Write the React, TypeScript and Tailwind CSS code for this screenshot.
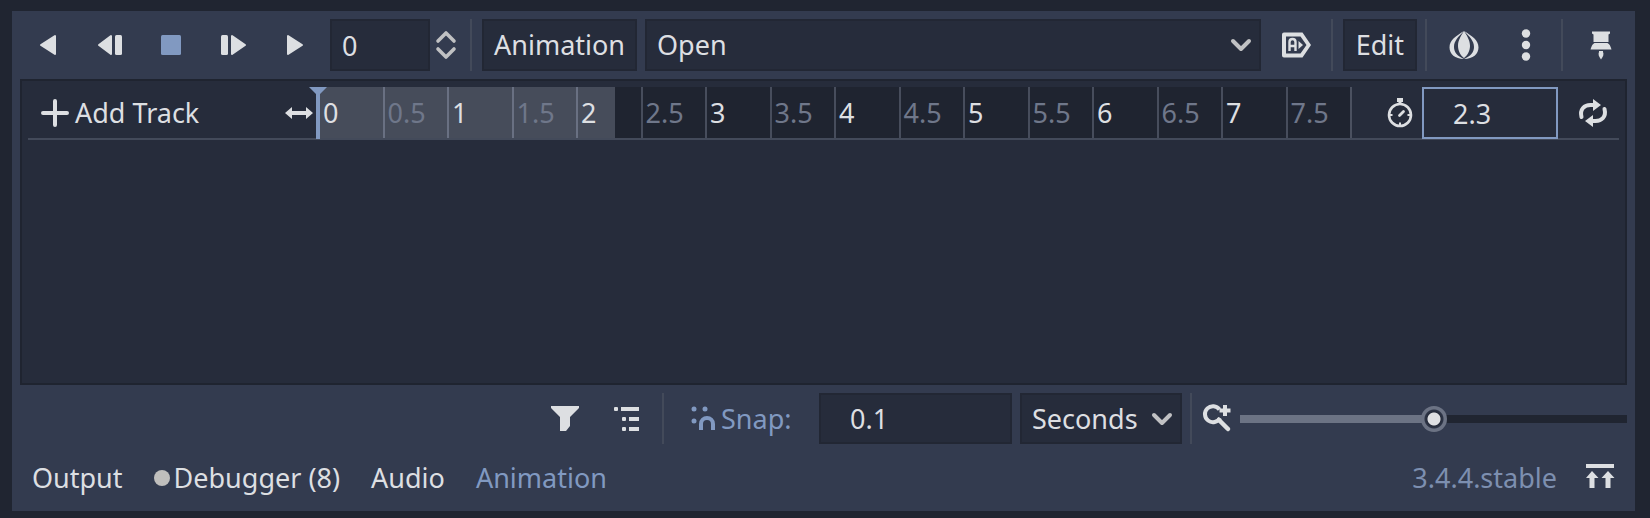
import React, { useState } from "react";

const Icon = ({ children, className = "" }: { children: React.ReactNode; className?: string }) => (
  <svg viewBox="0 0 32 32" fill="currentColor" className={"size-8 shrink-0 " + className} aria-hidden="true">
    {children}
  </svg>
);

const IconButton = ({ label, children, className = "" }: { label: string; children: React.ReactNode; className?: string }) => (
  <button aria-label={label} className={"flex h-full w-[54px] shrink-0 items-center justify-center " + className}>
    <Icon>{children}</Icon>
  </button>
);

const Separator = () => <div className="h-full w-1 shrink-0 border-l-2 border-[#434a5a]" />;

const box = "h-full border-2 border-[#222734] bg-[#262c3b]";

const Chevron = () => (
  <Icon className="pointer-events-none absolute top-0 right-1 bottom-0 my-auto text-[#c0c1c3]">
    <path d="M8 12l8 8 8-8" fill="none" stroke="currentColor" strokeWidth="4" strokeLinecap="round" strokeLinejoin="round" />
  </Icon>
);

const Select = ({ label, options, className }: { label: string; options: string[]; className: string }) => (
  <div className={"relative h-full " + className}>
    <select aria-label={label} className={box + " w-full appearance-none pl-[10px] outline-none"}>
      {options.map((o) => (
        <option key={o}>{o}</option>
      ))}
    </select>
    <Chevron />
  </div>
);

const RULER_END = 8;
const ticks = Array.from({ length: 16 }, (_, i) => i / 2);

function Toolbar() {
  return (
    <div className="flex h-[52px] gap-2">
      <IconButton label="Play backwards from end">
        <path d="M24 7v18L10 16z" stroke="currentColor" strokeWidth="2" strokeLinejoin="round" />
      </IconButton>
      <IconButton label="Play backwards">
        <path d="M18 7v18L6 16z" stroke="currentColor" strokeWidth="2" strokeLinejoin="round" />
        <rect x="22" y="6" width="7" height="20" rx="1.5" />
      </IconButton>
      <IconButton label="Stop" className="text-[#8199c1]">
        <rect x="6" y="6" width="20" height="20" rx="1.5" />
      </IconButton>
      <IconButton label="Play">
        <rect x="4" y="6" width="7" height="20" rx="1.5" />
        <path d="M15 7v18l13-9z" stroke="currentColor" strokeWidth="2" strokeLinejoin="round" />
      </IconButton>
      <IconButton label="Play from start">
        <path d="M9 7v18l14-9z" stroke="currentColor" strokeWidth="2" strokeLinejoin="round" />
      </IconButton>
      <div className="flex shrink-0">
        <input aria-label="Current time" defaultValue="0" className={box + " w-[100px] px-[10px] outline-none"} />
        <button aria-label="Step time" className="flex items-center">
          <Icon className="text-[#c0c1c3]">
            <path d="M8 12l8-8 8 8M8 20l8 8 8-8" fill="none" stroke="currentColor" strokeWidth="3.6" strokeLinecap="round" strokeLinejoin="round" />
          </Icon>
        </button>
      </div>
      <Separator />
      <button className={box + " shrink-0 px-[10px]"}>Animation</button>
      <Select label="Animation" options={["Open"]} className="min-w-0 flex-1" />
      <IconButton label="Autoplay on load">
        <path d="M4 3.500h18.500L31 16l-8.500 12.500H4a2 2 0 0 1-2-2v-21a2 2 0 0 1 2-2zM6 7.500v17h14.500L26.500 16l-6-8.500z" fillRule="evenodd" />
        <path d="M9.500 22V13q0-3 3-3t3 3v9M9.500 17h6" fill="none" stroke="currentColor" strokeWidth="2.400" />
        <path d="M18.500 12l4.500 4-4.500 4z" />
      </IconButton>
      <Separator />
      <button className={box + " shrink-0 px-[11px]"}>Edit</button>
      <Separator />
      <IconButton label="Onion skinning">
        <path d="M16 2c3 5 6 9 6 15 0 5-3 10-6 12-3-2-6-7-6-12 0-6 3-10 6-15z" />
        <path d="M16 2C8 7 1.500 11 1.500 18.500 1.500 25 7 30 16 30 9 27 6 23 6 18 6 12 10 8 16 2zM16 2c8 5 14.500 9 14.500 16.500C30.500 25 25 30 16 30c7-3 10-7 10-12C26 12 22 8 16 2z" />
      </IconButton>
      <IconButton label="Onion skinning options">
        <circle cx="16" cy="4.500" r="4.200" />
        <circle cx="16" cy="16" r="4.200" />
        <circle cx="16" cy="27.500" r="4.200" />
      </IconButton>
      <Separator />
      <IconButton label="Pin animation player">
        <path d="M8 2.500h18v2l-1.500 1v7.500h-15V5.500L8 4.500z" />
        <path d="M10.500 14h13c2 1 3 3 4 6.500h-21c1-3.500 2-5.500 4-6.500z" />
        <path d="M15 22h4v1q1.500 3-2 7.500-3.500-4.500-2-7.500z" />
      </IconButton>
    </div>
  );
}

function Timeline() {
  const [length, setLength] = useState("2.3");
  return (
    <div className="min-h-[120px] flex-1 border-2 border-[#1f2430] bg-[#262c3b] p-1.5">
      <div className="flex h-[53px] border-b-2 border-[#434a5a]">
        <div className="flex w-[290px] shrink-0 items-center justify-between">
          <button className="flex items-center gap-1 pl-[11px]">
            <Icon>
              <path d="M16 4v24M4 16h24" fill="none" stroke="currentColor" strokeWidth="4" strokeLinecap="round" />
            </Icon>
            Add Track
          </button>
          <Icon className="mr-[3px]">
            <path d="M2 16l7-6v4h14v-4l7 6-7 6v-4H9v4z" />
          </Icon>
        </div>
        <div className="relative grid min-w-0 flex-1 grid-cols-[repeat(16,minmax(0,1fr))] border-r-2 border-[#4b5160] bg-[#1f2430]">
          <div className="absolute inset-y-0 left-0 bg-[#464c5a]" style={{ width: `${(Number(length) / RULER_END) * 100}%` }} />
          {ticks.map((t) => (
            <div
              key={t}
              className={
                "relative flex items-center border-l-2 pl-[3px] " +
                (t <= Number(length) ? "border-[#697082] " : "border-[#474d5c] ") +
                (Number.isInteger(t) ? "text-[#dddfe2]" : "text-[#6f778a]")
              }
            >
              {t}
            </div>
          ))}
          <svg viewBox="0 0 18 52" className="absolute top-0 -left-[9px] h-[52px] w-[18px]" fill="#8199c1" aria-hidden="true">
            <path d="M0 0h18l-7 7v45H7V7z" />
          </svg>
        </div>
        <label htmlFor="length" className="flex shrink-0 items-center pr-1.5 pl-8">
          <Icon>
            <circle cx="16" cy="18" r="11" fill="none" stroke="currentColor" strokeWidth="2.600" />
            <path d="M13 1h6v4h-1.500v3h-3V5H13z" />
            <path d="M15.500 18.500l4-4" stroke="currentColor" strokeWidth="2.800" strokeLinecap="round" />
            <path d="M5 18h3.500M23.500 18H27M16 25.500V29" stroke="currentColor" strokeWidth="2" />
          </Icon>
        </label>
        <input
          id="length"
          aria-label="Animation length (seconds)"
          value={length}
          onChange={(e) => setLength(e.target.value)}
          className="h-[52px] w-[136px] shrink-0 border-2 border-[#8199c1] pl-[29px] outline-none"
        />
        <button aria-label="Animation looping" className="flex w-[61px] shrink-0 items-center justify-center pl-2">
          <Icon>
            <path d="M4.500 20c-2-8 3-12 9-12h5M27.500 12c2 8-3 12-9 12h-5" fill="none" stroke="currentColor" strokeWidth="4" strokeLinecap="round" />
            <path d="M16 2l8 6-8 6zM16 18v12l-8-6z" />
          </Icon>
        </button>
      </div>
    </div>
  );
}

function Options() {
  const [zoom, setZoom] = useState(50);
  return (
    <div className="flex h-[51px] justify-end gap-2">
      <IconButton label="Only show tracks from selected nodes">
        <path d="M2 3h28v2l-9 9v9l-4 5h-6V14L2 5z" />
      </IconButton>
      <IconButton label="Group tracks by node">
        <rect x="3" y="4" width="4" height="4" rx="1" />
        <rect x="10" y="4" width="18" height="4" />
        <rect x="11" y="14" width="4" height="4" rx="1" />
        <rect x="18" y="14" width="10" height="4" />
        <rect x="11" y="24" width="4" height="4" rx="1" />
        <rect x="18" y="24" width="10" height="4" />
      </IconButton>
      <Separator />
      <label htmlFor="snap" className="flex w-[137px] shrink-0 items-center pl-[15px] text-[#8199c1]">
        <Icon>
          <circle cx="5" cy="6" r="2.500" />
          <circle cx="16" cy="6" r="2.500" />
          <circle cx="5" cy="18" r="2.500" />
          <path d="M12 27v-6a6 6 0 0 1 12 0v6" fill="none" stroke="currentColor" strokeWidth="4" />
        </Icon>
        Snap:
      </label>
      <input id="snap" defaultValue="0.1" className={box + " w-[193px] min-w-0 pl-[29px] outline-none"} />
      <Select label="Snap mode" options={["Seconds", "FPS"]} className="w-[162px] shrink-0" />
      <Separator />
      <div className="flex shrink-0 items-center gap-1.5">
        <Icon>
          <path d="M17.500 6.500A8 8 0 1 0 18 15" fill="none" stroke="currentColor" strokeWidth="4" />
          <path d="M17 17l9 9" stroke="currentColor" strokeWidth="4.500" strokeLinecap="round" />
          <path d="M23 2v11M17.500 7.500h11" stroke="currentColor" strokeWidth="4" />
        </Icon>
        <input
          type="range"
          aria-label="Timeline zoom"
          value={zoom}
          onChange={(e) => setZoom(Number(e.target.value))}
          style={{ backgroundImage: `linear-gradient(to right, #6c7384 ${zoom}%, #202531 ${zoom}%)` }}
          className="h-2 w-[387px] appearance-none [&::-webkit-slider-thumb]:size-[26px] [&::-webkit-slider-thumb]:appearance-none [&::-webkit-slider-thumb]:rounded-full [&::-webkit-slider-thumb]:bg-[radial-gradient(circle,#dfe0e3_6px,#262c3b_7px,#2d3446_9px,#6c7384_10px)]"
        />
      </div>
    </div>
  );
}

function BottomTabs() {
  const tab = "flex h-full shrink-0 items-center pr-[11px] pl-3";
  return (
    <div className="flex h-[51px] gap-2">
      <button className={tab}>Output</button>
      <button className={tab + " gap-1"}>
        <span className="size-4 rounded-full bg-[#c0bfbd]" />
        Debugger (8)
      </button>
      <button className={tab}>Audio</button>
      <button className={tab + " text-[#8199c1]"}>Animation</button>
      <div className="flex-1" />
      <a href="#version" className="flex items-center pr-2 text-[#7d8fb0]">
        3.4.4.stable
      </a>
      <IconButton label="Expand bottom panel">
        <rect x="2" y="2" width="28" height="4" />
        <path d="M8 9l6.500 7H10.500v10h-5V16H2zM24 9l6.500 7H26.500v10h-5V16H17.500z" />
      </IconButton>
    </div>
  );
}

export default function App() {
  return (
    <div className="flex min-h-screen flex-col bg-[#202531] pt-[11px] pr-[15px] pb-[7px] pl-3 font-['Noto_Sans',sans-serif] text-[27px] leading-9 text-[#dddfe2]">
      <main className="flex flex-1 flex-col gap-2 bg-[#333b4f] p-2">
        <Toolbar />
        <Timeline />
        <Options />
        <BottomTabs />
      </main>
    </div>
  );
}
